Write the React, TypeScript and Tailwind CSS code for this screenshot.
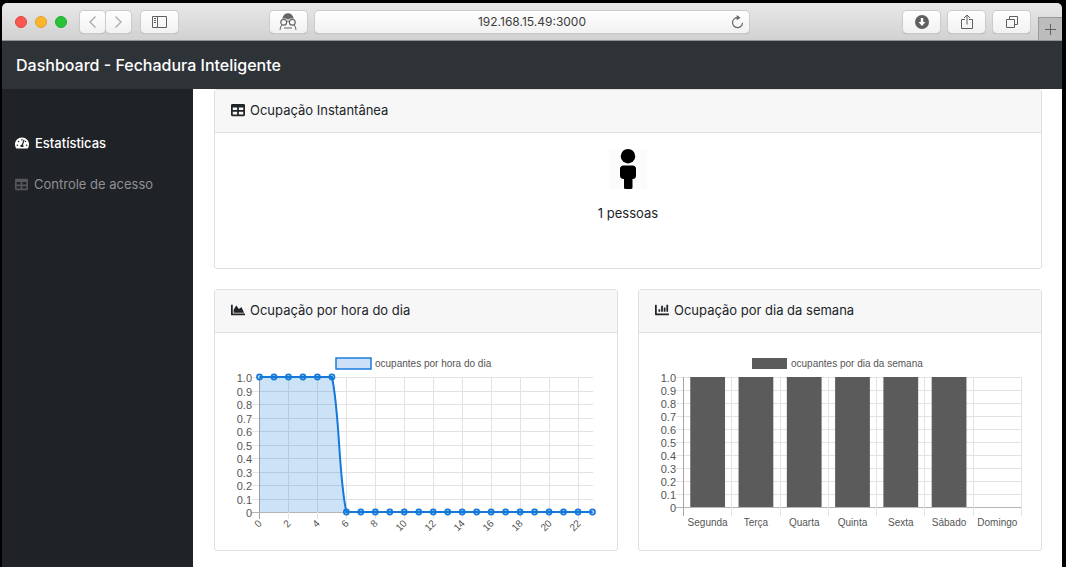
import type { ReactNode } from "react";
import { FaChartArea, FaChartBar, FaTable, FaTachometerAlt } from "react-icons/fa";

const hours = Array.from({ length: 24 }, (_, hour) => ({ hour, value: hour < 6 ? 1 : 0 }));
const days = [
  { day: "Segunda", value: 1 },
  { day: "Terça", value: 1 },
  { day: "Quarta", value: 1 },
  { day: "Quinta", value: 1 },
  { day: "Sexta", value: 1 },
  { day: "Sábado", value: 1 },
  { day: "Domingo", value: 0 },
];
const ticks = ["0", "0.1", "0.2", "0.3", "0.4", "0.5", "0.6", "0.7", "0.8", "0.9", "1.0"];

function ToolButton({ label, className, children }: { label: string; className: string; children: ReactNode }) {
  return (
    <button
      type="button"
      aria-label={label}
      className={`flex h-[22px] shrink-0 items-center justify-center rounded bg-gradient-to-b from-white to-[#f1f1f1] text-[#666] shadow-[0_0_0_1px_#cbcbcb,0_1px_1px_#999] ${className}`}
    >
      {children}
    </button>
  );
}

function Toolbar() {
  return (
    <div className="grid h-[38px] grid-cols-[1fr_41%_1fr] items-center rounded-t-[5px] border-b border-[#929292] bg-gradient-to-b from-[#e8e8e8] to-[#d1d1d1]">
      <div className="flex items-center pl-[13px] pr-2">
        <div className="flex gap-2">
          <span className="size-3 rounded-full border border-[#e0443e] bg-[#fc5753]" />
          <span className="size-3 rounded-full border border-[#e0a028] bg-[#fdb52b]" />
          <span className="size-3 rounded-full border border-[#1fac2f] bg-[#28c337]" />
        </div>
        <div className="ml-[13px] flex gap-px">
          <ToolButton label="Voltar" className="w-[25px]">
            <svg width="9" height="14" viewBox="0 0 9 14" fill="none" stroke="#ababab" strokeWidth="1.3">
              <path d="M7.5 1.5 2 7l5.500 5.500" />
            </svg>
          </ToolButton>
          <ToolButton label="Avançar" className="w-[25px]">
            <svg width="9" height="14" viewBox="0 0 9 14" fill="none" stroke="#ababab" strokeWidth="1.3">
              <path d="M1.500 1.500 7 7l-5.500 5.500" />
            </svg>
          </ToolButton>
        </div>
        <ToolButton label="Barra lateral" className="ml-[10px] w-[37px]">
          <svg width="15" height="12" viewBox="0 0 15 12" fill="none" stroke="#606060">
            <path d="M.5.5h14v11H.5zM5.500.5v11M2 2.500h2M2 4.500h2M2 6.500h2" />
          </svg>
        </ToolButton>
        <ToolButton label="Privacidade" className="ml-auto w-[37px]">
          <svg width="18" height="18" viewBox="0 0 18 18" fill="none" stroke="#666">
            <path d="M3.200 5.500C4.200 2 6.200.3 9 .3s4.800 1.700 5.800 5.200H11.500L9 6.500 6.500 5.500z" fill="#666" stroke="none" />
            <circle cx="4.700" cy="9.300" r="2.900" strokeWidth="1.200" />
            <circle cx="13.300" cy="9.300" r="2.900" strokeWidth="1.200" />
            <path d="M7.500 8.500q1.500-1 3 0M2.800 12Q1.200 13.500 1 17M15.200 12Q16.800 13.500 17 17" />
            <path d="M5.500 15h7" strokeWidth="2" strokeDasharray="1 1" />
          </svg>
        </ToolButton>
      </div>
      <div className="relative flex h-[22px] items-center rounded bg-gradient-to-b from-white to-[#f1f1f1] shadow-[0_0_0_1px_#cbcbcb,0_1px_1px_#999]">
        <input
          aria-label="Endereço"
          defaultValue="192.168.15.49:3000"
          className="w-full bg-transparent text-center text-xs text-[#3c3c3c] outline-none"
        />
        <button type="button" aria-label="Recarregar" className="absolute right-[5px]">
          <svg width="13" height="14" viewBox="0 0 13 14" fill="none" stroke="#666" strokeWidth="1.200">
            <path d="M7 2.700a5 5 0 1 0 4.500 5" />
            <path d="M5.700 0v5.300l3.900-2.600z" fill="#666" stroke="none" />
          </svg>
        </button>
      </div>
      <div className="flex h-full items-center justify-end gap-2">
        <ToolButton label="Downloads" className="w-[37px]">
          <svg width="14" height="14" viewBox="0 0 14 14">
            <circle cx="7" cy="7" r="7" fill="#606060" />
            <path d="M5.800 3h2.400v4h2.300L7 10.900 3.500 7h2.300z" fill="#fff" />
          </svg>
        </ToolButton>
        <ToolButton label="Compartilhar" className="w-[37px]">
          <svg width="12" height="16" viewBox="0 0 12 16" fill="none" stroke="#606060">
            <path d="M4 5.500H.5v9h11v-9H8M6 10.500V1.200M3 4l3-3 3 3" />
          </svg>
        </ToolButton>
        <ToolButton label="Abas" className="w-[37px]">
          <svg width="12" height="12" viewBox="0 0 12 12" fill="none" stroke="#606060">
            <path d="M.5 3.500h8v8h-8zM3.500 3.500v-3h8v8h-3" />
          </svg>
        </ToolButton>
        <button
          type="button"
          aria-label="Nova aba"
          className="flex h-[23px] w-6 items-center justify-center self-end border-l border-t border-[#999] bg-[#bcbcbc]"
        >
          <svg width="11" height="11" viewBox="0 0 11 11" stroke="#606060">
            <path d="M5.500 0v11M0 5.500h11" />
          </svg>
        </button>
      </div>
    </div>
  );
}

function Card({ icon, title, children }: { icon: ReactNode; title: string; children: ReactNode }) {
  return (
    <section className="min-w-0 overflow-hidden rounded-[3px] border border-[#dfdfdf] bg-white">
      <h2 className="flex items-center gap-[5px] border-b border-[#dfdfdf] bg-[#f7f7f7] px-4 pb-3 pt-[10px] text-[13px] leading-5">
        {icon}
        {title}
      </h2>
      {children}
    </section>
  );
}

function YAxis({ bottom, right }: { bottom: number; right: number }) {
  const step = (bottom - 26) / 10;
  return (
    <g>
      {ticks.map((tick, i) => {
        const y = Math.round(bottom - step * i) + 0.5;
        return (
          <g key={tick}>
            <path d={`M17 ${y}H${right}`} stroke={i === 0 ? "#b5b5b5" : "#e3e3e3"} />
            <text x="17" y={y + 4} textAnchor="end" className="text-[11px]">
              {tick}
            </text>
          </g>
        );
      })}
    </g>
  );
}

function HourChart() {
  const step = 333 / 23;
  const x = (hour: number) => 24.5 + hour * step;
  const y = (value: number) => 161 - value * 135;
  const curve = `M${x(0)} ${y(1)}H${x(5)}C${x(5) + 8} ${y(1) + 36} ${x(6) - 8} ${y(0) - 36} ${x(6)} ${y(0)}`;
  return (
    <svg viewBox="0 0 362 181" className="block w-full overflow-visible fill-[#555] text-[10px]" role="img" aria-label="ocupantes por hora do dia">
      <rect x="101" y="7" width="35" height="11" fill="#cce0f7" stroke="#1a7ddc" strokeWidth="1.500" />
      <text x="140" y="16">ocupantes por hora do dia</text>
      <YAxis bottom={161} right={358} />
      {hours.filter(({ hour }) => hour % 2 === 0).map(({ hour }) => {
        const px = Math.round(x(hour) - 0.5) + 0.5;
        return (
          <g key={hour}>
            <path d={`M${px} 26V168`} stroke={hour === 0 ? "#a5a5a5" : "#e3e3e3"} />
            <text transform={`translate(${px + 3} 173) rotate(-45)`} textAnchor="end">
              {hour}
            </text>
          </g>
        );
      })}
      <path d={`${curve}H${x(0)}z`} fill="#0275d8" fillOpacity=".2" />
      <path d={`${curve}H${x(23)}`} fill="none" stroke="#1479da" strokeWidth="2" />
      {hours.map(({ hour, value }) => (
        <circle key={hour} cx={x(hour)} cy={y(value)} r="2.600" fill="#0275d8" fillOpacity=".2" stroke="#1479da" strokeWidth="1.600" />
      ))}
    </svg>
  );
}

function WeekChart() {
  const step = 338 / 7;
  return (
    <svg viewBox="0 0 362 181" className="block w-full overflow-visible fill-[#555] text-[10px]" role="img" aria-label="ocupantes por dia da semana">
      <rect x="93" y="7" width="35" height="11" fill="#5b5b5b" />
      <text x="132" y="16">ocupantes por dia da semana</text>
      <YAxis bottom={156} right={363} />
      {[0, 1, 2, 3, 4, 5, 6, 7].map((i) => {
        const px = Math.round(24 + i * step) + 0.5;
        return <path key={i} d={`M${px} 26V165`} stroke={i === 0 ? "#a5a5a5" : "#e3e3e3"} />;
      })}
      {days.map(({ day, value }, i) => (
        <g key={day}>
          <rect x={24.5 + step * (i + 0.14)} y={156 - value * 130} width={step * 0.72} height={value * 130} fill="#5b5b5b" />
          <text x={24.5 + step * (i + 0.5)} y="175" textAnchor="middle">
            {day}
          </text>
        </g>
      ))}
    </svg>
  );
}

export default function App() {
  return (
    <div className="flex min-h-screen flex-col bg-black pl-[2px] pr-1 pt-[3px] font-['Inter',sans-serif] text-[#212529]">
      <Toolbar />
      <header className="flex h-12 items-center bg-[#2e3338] px-[14px]">
        <a href="#inicio" className="text-base font-medium leading-6 text-white">
          Dashboard - Fechadura Inteligente
        </a>
      </header>
      <div className="flex flex-1">
        <nav className="flex w-[191px] shrink-0 flex-col bg-[#1f2226] pt-[34px] text-[13px] leading-5">
          <a href="#estatisticas" className="flex items-center gap-[6px] px-[13px] py-[10px] font-medium text-white">
            <FaTachometerAlt className="size-[14px]" />
            Estatísticas
          </a>
          <a href="#acesso" className="flex items-center gap-[6px] px-[13px] py-[11px] text-[#8f9092]">
            <FaTable className="size-[13px] text-[#55575a]" />
            Controle de acesso
          </a>
        </nav>
        <main className="min-w-0 flex-1 bg-white pl-[21px] pr-5">
          <Card icon={<FaTable className="size-[14px]" />} title="Ocupação Instantânea">
            <div className="flex flex-col items-center pb-[45px] pt-4">
              <svg width="38" height="40" viewBox="0 0 38 40" className="bg-[#fbfbfb]" aria-hidden="true">
                <circle cx="19" cy="7.200" r="7.200" />
                <path d="M14.500 16.500h9q3.500 0 3.500 3.500v6.500q0 3.500-3.500 3.500v8.500q0 1.500-1.500 1.500h-5.500q-1.500 0-1.500-1.500V30Q11 30 11 26.500V20q0-3.500 3.500-3.500z" />
              </svg>
              <p className="mt-[14px] text-[13px] leading-5">1 pessoas</p>
            </div>
          </Card>
          <div className="mt-5 grid grid-cols-2 gap-5 pb-4">
            <Card icon={<FaChartArea className="size-[14px]" />} title="Ocupação por hora do dia">
              <div className="px-5 py-[18px] font-['Liberation_Sans',sans-serif]">
                <HourChart />
              </div>
            </Card>
            <Card icon={<FaChartBar className="size-[14px]" />} title="Ocupação por dia da semana">
              <div className="px-5 py-[18px] font-['Liberation_Sans',sans-serif]">
                <WeekChart />
              </div>
            </Card>
          </div>
        </main>
      </div>
    </div>
  );
}
